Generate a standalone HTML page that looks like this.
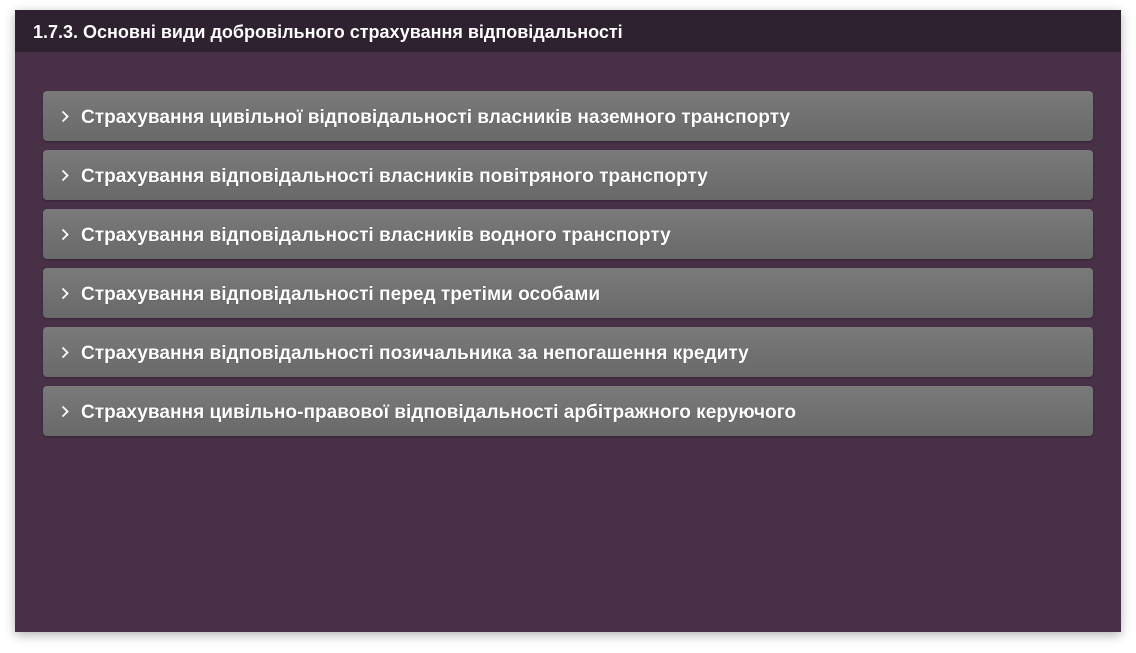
<!DOCTYPE html>
<html><head><meta charset="utf-8"><style>
body{margin:0;width:1136px;height:653px;background:#fff;font-family:"Liberation Sans","DejaVu Sans",sans-serif;overflow:hidden}
.panel{position:absolute;left:15px;top:10px;width:1106px;height:622px;background:#483047;box-shadow:0 3px 10px rgba(0,0,0,.3)}
.hd{height:42px;background:#2f2230;color:#fff;font-weight:bold;font-size:18px;line-height:44px;padding-left:18px;text-shadow:0 0 1px rgba(0,0,0,.5)}
.it{position:absolute;left:28px;width:1050px;height:50px;border-radius:4px;background:linear-gradient(#7a7a7a,#696969);box-shadow:0 1px 2px rgba(0,0,0,.3);color:#fff;font-weight:bold;font-size:19.1px;line-height:53px;text-shadow:0 0 1px rgba(0,0,0,.5)}
.it svg{position:absolute;left:18px;top:19px}
.it span{position:absolute;left:38px;top:0}
</style></head><body>
<div class="panel">
<div class="hd">1.7.3. Основні види добровільного страхування відповідальності</div>
<div class="it" style="top:81px"><svg width="8" height="13" viewBox="0 0 8 13"><path d="M1.5 1.5L6.5 6.5L1.5 11.5" fill="none" stroke="#fff" stroke-width="1.8"/></svg><span>Страхування цивільної відповідальності власників наземного транспорту</span></div>
<div class="it" style="top:140px"><svg width="8" height="13" viewBox="0 0 8 13"><path d="M1.5 1.5L6.5 6.5L1.5 11.5" fill="none" stroke="#fff" stroke-width="1.8"/></svg><span>Страхування відповідальності власників повітряного транспорту</span></div>
<div class="it" style="top:199px"><svg width="8" height="13" viewBox="0 0 8 13"><path d="M1.5 1.5L6.5 6.5L1.5 11.5" fill="none" stroke="#fff" stroke-width="1.8"/></svg><span>Страхування відповідальності власників водного транспорту</span></div>
<div class="it" style="top:258px"><svg width="8" height="13" viewBox="0 0 8 13"><path d="M1.5 1.5L6.5 6.5L1.5 11.5" fill="none" stroke="#fff" stroke-width="1.8"/></svg><span>Страхування відповідальності перед третіми особами</span></div>
<div class="it" style="top:317px"><svg width="8" height="13" viewBox="0 0 8 13"><path d="M1.5 1.5L6.5 6.5L1.5 11.5" fill="none" stroke="#fff" stroke-width="1.8"/></svg><span>Страхування відповідальності позичальника за непогашення кредиту</span></div>
<div class="it" style="top:376px"><svg width="8" height="13" viewBox="0 0 8 13"><path d="M1.5 1.5L6.5 6.5L1.5 11.5" fill="none" stroke="#fff" stroke-width="1.8"/></svg><span>Страхування цивільно-правової відповідальності арбітражного керуючого</span></div>
</div>
</body></html>
